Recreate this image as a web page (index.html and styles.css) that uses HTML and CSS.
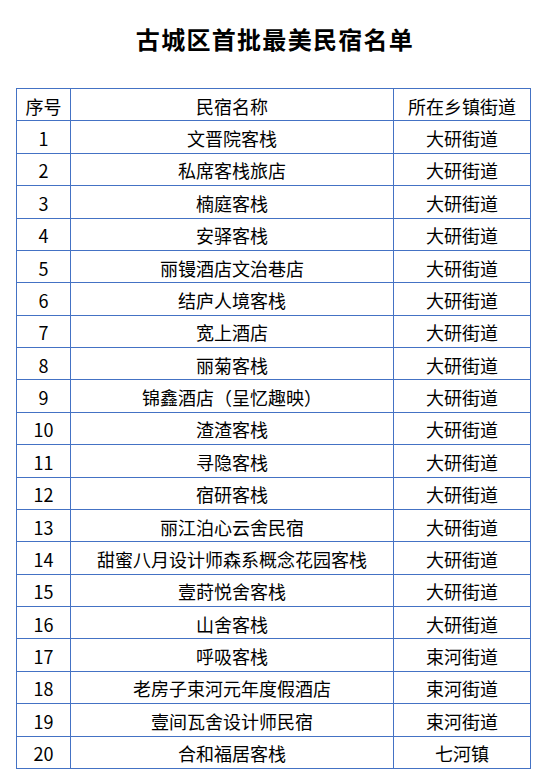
FILE: index.html
```html
<!DOCTYPE html>
<html lang="zh-CN">
<head>
<meta charset="utf-8">
<link rel="stylesheet" href="styles.css">
</head>
<body>
<div class="page">
  <h1 class="title">古城区首批最美民宿名单</h1>
  <table class="list">
    <colgroup>
      <col class="c-no">
      <col class="c-name">
      <col class="c-area">
    </colgroup>
    <thead>
      <tr><th>序号</th><th>民宿名称</th><th>所在乡镇街道</th></tr>
    </thead>
    <tbody>
      <tr><td>1</td><td>文晋院客栈</td><td>大研街道</td></tr>
      <tr><td>2</td><td>私席客栈旅店</td><td>大研街道</td></tr>
      <tr><td>3</td><td>楠庭客栈</td><td>大研街道</td></tr>
      <tr><td>4</td><td>安驿客栈</td><td>大研街道</td></tr>
      <tr><td>5</td><td>丽镘酒店文治巷店</td><td>大研街道</td></tr>
      <tr><td>6</td><td>结庐人境客栈</td><td>大研街道</td></tr>
      <tr><td>7</td><td>宽上酒店</td><td>大研街道</td></tr>
      <tr><td>8</td><td>丽菊客栈</td><td>大研街道</td></tr>
      <tr><td>9</td><td>锦鑫酒店（呈忆趣映）</td><td>大研街道</td></tr>
      <tr><td>10</td><td>渣渣客栈</td><td>大研街道</td></tr>
      <tr><td>11</td><td>寻隐客栈</td><td>大研街道</td></tr>
      <tr><td>12</td><td>宿研客栈</td><td>大研街道</td></tr>
      <tr><td>13</td><td>丽江泊心云舍民宿</td><td>大研街道</td></tr>
      <tr><td>14</td><td>甜蜜八月设计师森系概念花园客栈</td><td>大研街道</td></tr>
      <tr><td>15</td><td>壹莳悦舍客栈</td><td>大研街道</td></tr>
      <tr><td>16</td><td>山舍客栈</td><td>大研街道</td></tr>
      <tr><td>17</td><td>呼吸客栈</td><td>束河街道</td></tr>
      <tr><td>18</td><td>老房子束河元年度假酒店</td><td>束河街道</td></tr>
      <tr><td>19</td><td>壹间瓦舍设计师民宿</td><td>束河街道</td></tr>
      <tr><td>20</td><td>合和福居客栈</td><td>七河镇</td></tr>
    </tbody>
  </table>
</div>
</body>
</html>
```
FILE: styles.css
```css
html, body {
  margin: 0;
  padding: 0;
  background: #ffffff;
}
body {
  font-family: "Noto Sans CJK SC", "Microsoft YaHei", "Noto Sans", sans-serif;
  color: #000000;
}
.page {
  width: 548px;
  padding-top: 19px;
}
.title {
  margin: 0 0 0 2px;
  height: 40px;
  font-size: 24px;
  line-height: 40px;
  font-weight: bold;
  letter-spacing: 1.3px;
  text-align: center;
}
.list {
  margin: 29px 0 0 16px;
  border-collapse: collapse;
  table-layout: fixed;
  width: 514px;
  font-size: 18px;
}
.c-no { width: 54px; }
.c-name { width: 323px; }
.c-area { width: 137px; }
.list th, .list td {
  border: 1px solid #4472c4;
  padding: 2px 0 0 0;
  height: 29.38px;
  text-align: center;
  vertical-align: middle;
  font-weight: normal;
  line-height: 22px;
  white-space: nowrap;
}
```
